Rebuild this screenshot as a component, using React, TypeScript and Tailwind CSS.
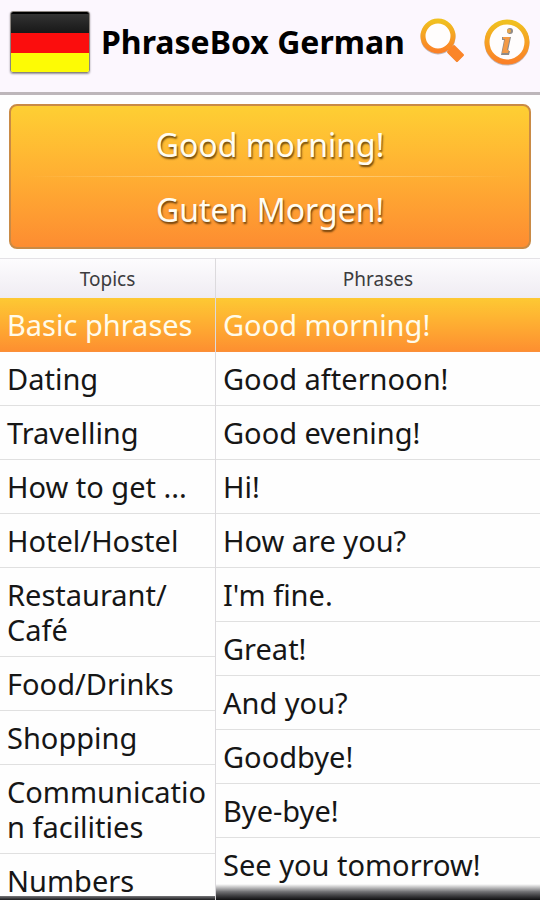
import { useState } from "react";

const topics = [
  "Basic phrases",
  "Dating",
  "Travelling",
  "How to get ...",
  "Hotel/Hostel",
  "Restaurant/ Café",
  "Food/Drinks",
  "Shopping",
  "Communication facilities",
  "Numbers",
];

const phrases = [
  "Good morning!",
  "Good afternoon!",
  "Good evening!",
  "Hi!",
  "How are you?",
  "I'm fine.",
  "Great!",
  "And you?",
  "Goodbye!",
  "Bye-bye!",
  "See you tomorrow!",
];

function Flag() {
  return (
    <div
      role="img"
      aria-label="German flag"
      className="flex h-[62px] w-20 shrink-0 flex-col overflow-hidden rounded-[3px] border border-[#8b8580] shadow-[0_1px_2px_rgba(0,0,0,0.4)]"
    >
      <div className="flex-1 border-t-2 border-black bg-linear-to-b from-[#333333] to-[#181818]" />
      <div className="flex-1 bg-[#fb0d0d]" />
      <div className="flex-1 bg-[#fdfb05]" />
    </div>
  );
}

function SearchIcon() {
  return (
    <svg viewBox="0 0 48 50" className="h-[50px] w-12" aria-hidden="true">
      <defs>
        <linearGradient id="lens" x1="0" y1="0" x2="0" y2="1">
          <stop offset="0" stopColor="#f0c020" />
          <stop offset="1" stopColor="#fb8127" />
        </linearGradient>
      </defs>
      <g transform="translate(0 1)" opacity="0.4">
        <circle cx="18" cy="19" r="15" fill="none" stroke="#6b5a50" strokeWidth="5" />
        <path d="M31 32 L40 41" stroke="#6b5a50" strokeWidth="9" strokeLinejoin="round" />
      </g>
      <circle cx="18" cy="19" r="15" fill="#fffdfd" stroke="url(#lens)" strokeWidth="5" />
      <path d="M27 28 L33 34" stroke="#fb8b27" strokeWidth="5" />
      <path
        d="M34 29 L43 38 L37 44 L28 35 Z"
        fill="#fb8529"
        stroke="#fb8529"
        strokeWidth="2"
        strokeLinejoin="round"
      />
    </svg>
  );
}

function InfoIcon() {
  return (
    <svg viewBox="0 0 48 50" className="h-[50px] w-12" aria-hidden="true">
      <defs>
        <linearGradient id="ring" x1="0" y1="0" x2="0" y2="1">
          <stop offset="0" stopColor="#f0c020" />
          <stop offset="1" stopColor="#fb8127" />
        </linearGradient>
      </defs>
      <circle cx="23" cy="26" r="20" fill="none" stroke="#6b5a50" strokeWidth="5" opacity="0.4" />
      <circle cx="23" cy="25" r="20" fill="#fffdfd" stroke="url(#ring)" strokeWidth="5" />
      <circle cx="26" cy="14" r="3" fill="#8f8a86" />
      <circle cx="25" cy="14" r="2" fill="#e9a84c" />
      <path d="M18 20 H27 L24 34 H26 L25 38 H17 L20 23 H18 Z" fill="#8f8a86" />
      <path d="M19 20 H26 L23 33 H25 L24 36 H18 L21 22 H19 Z" fill="#f39a45" />
    </svg>
  );
}

type ColumnProps = {
  title: string;
  items: string[];
  selected: number;
  onSelect: (index: number) => void;
  fade: string;
};

function Column({ title, items, selected, onSelect, fade }: ColumnProps) {
  return (
    <section className="relative flex min-h-0 flex-col overflow-hidden">
      <h2 className="flex h-10 shrink-0 items-center justify-center border-t border-[#e4e2e6] bg-linear-to-b from-[#fdfcfe] to-[#efecf2] pt-0.5 text-[19px] text-[#3c3c3e]">
        {title}
      </h2>
      <ul>
        {items.map((item, index) => (
          <li key={item}>
            <button
              type="button"
              aria-pressed={index === selected}
              onClick={() => onSelect(index)}
              className={
                "block w-full border-b px-[7px] py-[9px] text-left text-[29px] leading-[35px] wrap-anywhere " +
                (index === selected
                  ? "border-[#fb8f3a] bg-linear-to-b from-[#fdc933] to-[#fd8f30] text-[#fffbea]"
                  : "border-[#e0e0e0] text-[#161616]")
              }
            >
              {item}
            </button>
          </li>
        ))}
      </ul>
      <div className={"pointer-events-none absolute inset-x-0 bottom-0 bg-linear-to-b " + fade} />
    </section>
  );
}

export default function App() {
  const [topic, setTopic] = useState(0);
  const [phrase, setPhrase] = useState(0);

  return (
    <main className="flex h-screen flex-col overflow-hidden bg-[#fefefe] font-['Noto_Sans','Open_Sans',sans-serif]">
      <header className="flex h-[95px] shrink-0 items-center border-b-[3px] border-[#bdb6ba] bg-[#fcf7fe] pr-2 pb-2 pl-[10px]">
        <Flag />
        <h1 className="ml-[11px] flex-1 text-[32px] font-bold whitespace-nowrap text-black">
          PhraseBox German
        </h1>
        <button type="button" aria-label="Search" className="shrink-0">
          <SearchIcon />
        </button>
        <button type="button" aria-label="Information" className="ml-4 shrink-0">
          <InfoIcon />
        </button>
      </header>

      <div className="m-[9px] flex shrink-0 flex-col rounded-lg border-2 border-[#c98a45] bg-linear-to-b from-[#fecf33] to-[#fd8c31] text-center text-[32px] text-[#fffdf2] [text-shadow:1px_2px_2px_rgba(70,40,0,0.8)]">
        <p className="flex h-[70px] items-center justify-center pt-2">{phrases[phrase]}</p>
        <div className="mx-4 h-px bg-linear-to-r from-transparent via-[#ffd992] to-transparent" />
        <p className="flex h-[70px] items-center justify-center pb-1">Guten Morgen!</p>
      </div>

      <div className="grid min-h-0 flex-1 grid-cols-[2fr_3fr]">
        <div className="grid min-h-0 border-r border-[#dcdadd]">
          <Column
            title="Topics"
            items={topics}
            selected={topic}
            onSelect={setTopic}
            fade="h-1 from-[#77777a] to-[#1c1c1e]"
          />
        </div>
        <Column
          title="Phrases"
          items={phrases}
          selected={phrase}
          onSelect={setPhrase}
          fade="h-4 from-transparent via-[#6d6d70] to-[#101012]"
        />
      </div>
    </main>
  );
}
